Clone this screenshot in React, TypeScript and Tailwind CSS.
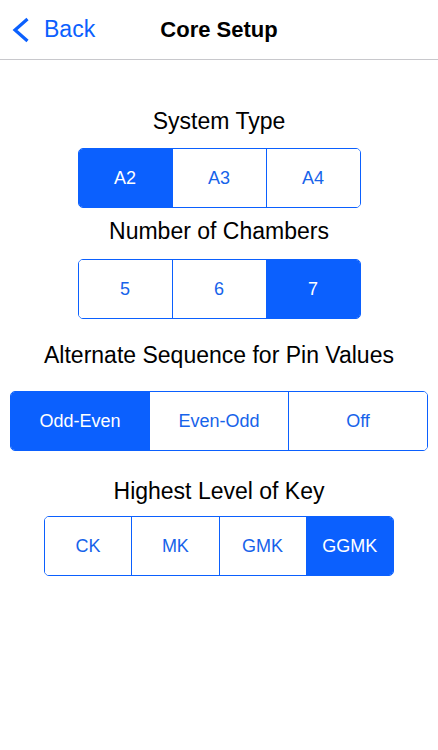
import React from "react";

const BLUE = "#0b60fe";

function Segmented({
  items,
  selected,
  widthClass,
}: {
  items: string[];
  selected: number;
  widthClass: string;
}) {
  return (
    <div
      className={`${widthClass} h-[60px] flex rounded-[5px] border-[1.5px] border-[#0b60fe] overflow-hidden`}
    >
      {items.map((it, i) => (
        <div
          key={it}
          className={`flex-1 flex items-center justify-center text-[18px] ${
            i > 0 ? "border-l-[1.5px] border-[#0b60fe]" : ""
          } ${i === selected ? "bg-[#0b60fe] text-white" : "bg-white text-[#1763ea]"}`}
        >
          {it}
        </div>
      ))}
    </div>
  );
}

export default function App() {
  return (
    <div
      className="w-[438px] h-[750px] bg-white flex flex-col"
      style={{ fontFamily: '"Liberation Sans", Arial, sans-serif' }}
    >
      <div className="relative h-[59px] border-b border-[#c8c8cc] flex items-center justify-center shrink-0 box-content">
        <div className="absolute left-[12px] top-0 h-full flex items-center gap-[14px] text-[#0b60fe]">
          <svg width="18" height="26" viewBox="0 0 18 26">
            <path
              d="M15.5 2 L3 13 L15.5 24"
              fill="none"
              stroke={BLUE}
              strokeWidth="3.2"
              strokeLinecap="butt"
              strokeLinejoin="miter"
            />
          </svg>
          <span className="text-[23px]">Back</span>
        </div>
        <span className="text-[22px] font-bold text-black">Core Setup</span>
      </div>

      <div className="flex flex-col items-center">
        <div className="mt-[47px] h-[28px] leading-[28px] text-[23px] text-black">System Type</div>
        <div className="mt-[13px]">
          <Segmented items={["A2", "A3", "A4"]} selected={0} widthClass="w-[283px]" />
        </div>
        <div className="mt-[9px] h-[28px] leading-[28px] text-[23px] text-black">Number of Chambers</div>
        <div className="mt-[14px]">
          <Segmented items={["5", "6", "7"]} selected={2} widthClass="w-[283px]" />
        </div>
        <div className="mt-[22px] h-[28px] leading-[28px] text-[23px] text-black">
          Alternate Sequence for Pin Values
        </div>
        <div className="mt-[22px]">
          <Segmented items={["Odd-Even", "Even-Odd", "Off"]} selected={0} widthClass="w-[418px]" />
        </div>
        <div className="mt-[26px] h-[28px] leading-[28px] text-[23px] text-black">Highest Level of Key</div>
        <div className="mt-[11px]">
          <Segmented items={["CK", "MK", "GMK", "GGMK"]} selected={3} widthClass="w-[350px]" />
        </div>
      </div>
    </div>
  );
}
